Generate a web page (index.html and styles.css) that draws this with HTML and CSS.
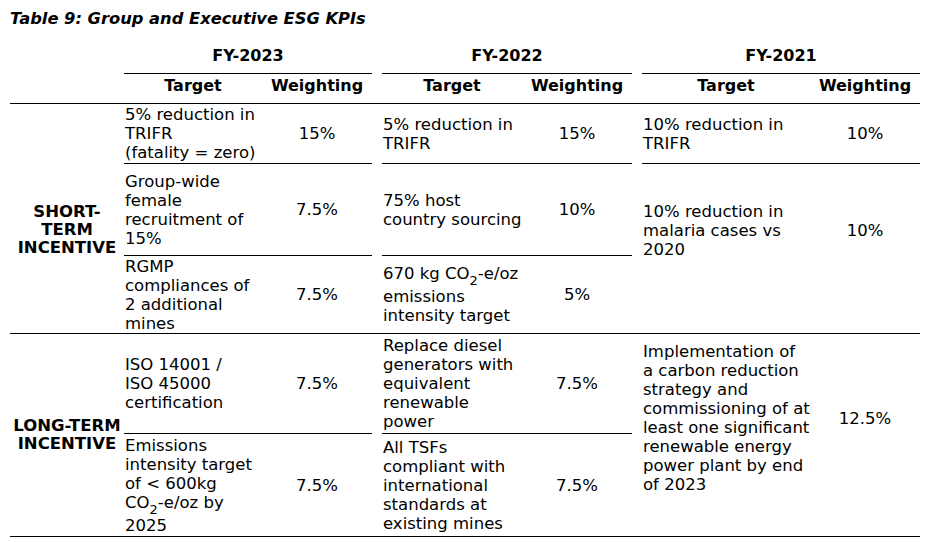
FILE: index.html
```html
<!DOCTYPE html>
<html lang="en">
<head>
<meta charset="utf-8">
<title>Table 9: Group and Executive ESG KPIs</title>
<link rel="stylesheet" href="styles.css">
</head>
<body>
<div class="page">
  <h1 class="title">Table 9: Group and Executive ESG KPIs</h1>
  <div class="kpi">
    <!-- year headers -->
    <div class="c"></div>
    <div class="c yr ul span2">FY-2023</div>
    <div class="c"></div>
    <div class="c yr ul span2">FY-2022</div>
    <div class="c"></div>
    <div class="c yr ul span2">FY-2021</div>

    <!-- sub headers -->
    <div class="c hd ul"></div>
    <div class="c hd ul">Target</div>
    <div class="c hd ul">Weighting</div>
    <div class="c hd ul"></div>
    <div class="c hd ul">Target</div>
    <div class="c hd ul">Weighting</div>
    <div class="c hd ul"></div>
    <div class="c hd ul">Target</div>
    <div class="c hd ul">Weighting</div>

    <!-- short term 1 -->
    <div class="c lbl ul rows3 short"><span>SHORT-<br>TERM<br>INCENTIVE</span></div>
    <div class="c t ul"><span>5% reduction in<br>TRIFR<br>(fatality = zero)</span></div>
    <div class="c w ul">15%</div>
    <div class="c"></div>
    <div class="c t ul"><span>5% reduction in<br>TRIFR</span></div>
    <div class="c w ul">15%</div>
    <div class="c"></div>
    <div class="c t ul"><span>10% reduction in<br>TRIFR</span></div>
    <div class="c w ul">10%</div>

    <!-- short term 2 -->
    <div class="c t ul"><span>Group-wide<br>female<br>recruitment of<br>15%</span></div>
    <div class="c w ul">7.5%</div>
    <div class="c"></div>
    <div class="c t ul"><span>75% host<br>country sourcing</span></div>
    <div class="c w ul">10%</div>
    <div class="c"></div>
    <div class="c t ul rows2 lift"><span>10% reduction in<br>malaria cases vs<br>2020</span></div>
    <div class="c w ul rows2 lift">10%</div>

    <!-- short term 3 -->
    <div class="c t ul"><span>RGMP<br>compliances of<br>2 additional<br>mines</span></div>
    <div class="c w ul">7.5%</div>
    <div class="c ul"></div>
    <div class="c t ul"><span>670 kg CO<sub>2</sub>-e/oz<br>emissions<br>intensity target</span></div>
    <div class="c w ul">5%</div>
    <div class="c ul"></div>

    <!-- long term 1 -->
    <div class="c lbl ul rows2"><span>LONG-TERM<br>INCENTIVE</span></div>
    <div class="c t ul"><span>ISO 14001 /<br>ISO 45000<br>certification</span></div>
    <div class="c w ul">7.5%</div>
    <div class="c"></div>
    <div class="c t ul"><span>Replace diesel<br>generators with<br>equivalent<br>renewable<br>power</span></div>
    <div class="c w ul">7.5%</div>
    <div class="c"></div>
    <div class="c t ul rows2 lift2"><span>Implementation of<br>a carbon reduction<br>strategy and<br>commissioning of at<br>least one significant<br>renewable energy<br>power plant by end<br>of 2023</span></div>
    <div class="c w ul rows2 lift2">12.5%</div>

    <!-- long term 2 -->
    <div class="c t ul"><span>Emissions<br>intensity target<br>of &lt; 600kg<br>CO<sub>2</sub>-e/oz by<br>2025</span></div>
    <div class="c w ul">7.5%</div>
    <div class="c ul"></div>
    <div class="c t ul"><span>All TSFs<br>compliant with<br>international<br>standards at<br>existing mines</span></div>
    <div class="c w ul">7.5%</div>
    <div class="c ul"></div>
  </div>
</div>
</body>
</html>
```

FILE: styles.css
```css
html, body {
  margin: 0;
  padding: 0;
  background: #ffffff;
}

.page {
  padding: 0 10px;
  color: #000000;
  font-family: "DejaVu Sans", Verdana, sans-serif;
}

.title {
  margin: 9px 0 0;
  height: 19px;
  font-size: 16.3px;
  line-height: 19px;
  font-weight: bold;
  font-style: italic;
}

.kpi {
  display: grid;
  width: 910px;
  grid-template-columns: 114px 138px 110px 10px 140px 110px 10px 168px 110px;
  grid-template-rows: 46px 30px 60px 92px 78px 100px 103px;
}

.c {
  box-sizing: border-box;
  display: flex;
  align-items: center;
  font-size: 16.5px;
  line-height: 19px;
  white-space: nowrap;
}

.ul {
  border-bottom: 1px solid #000000;
}

.span2 {
  grid-column: span 2;
}

.rows2 {
  grid-row: span 2;
}

.rows3 {
  grid-row: span 3;
}

.yr,
.hd {
  align-items: flex-end;
  justify-content: center;
  padding-bottom: 8px;
  font-size: 16px;
  font-weight: bold;
}

.t {
  padding-left: 1px;
}

.w {
  justify-content: center;
}

.lbl {
  justify-content: center;
  text-align: center;
  font-weight: bold;
  line-height: 18px;
}

.short {
  padding-top: 22px;
}

.lift {
  padding-bottom: 36px;
}

.lift2 {
  padding-bottom: 34px;
}

sub {
  font-size: 13px;
  line-height: 13px;
  vertical-align: -6px;
}
```
